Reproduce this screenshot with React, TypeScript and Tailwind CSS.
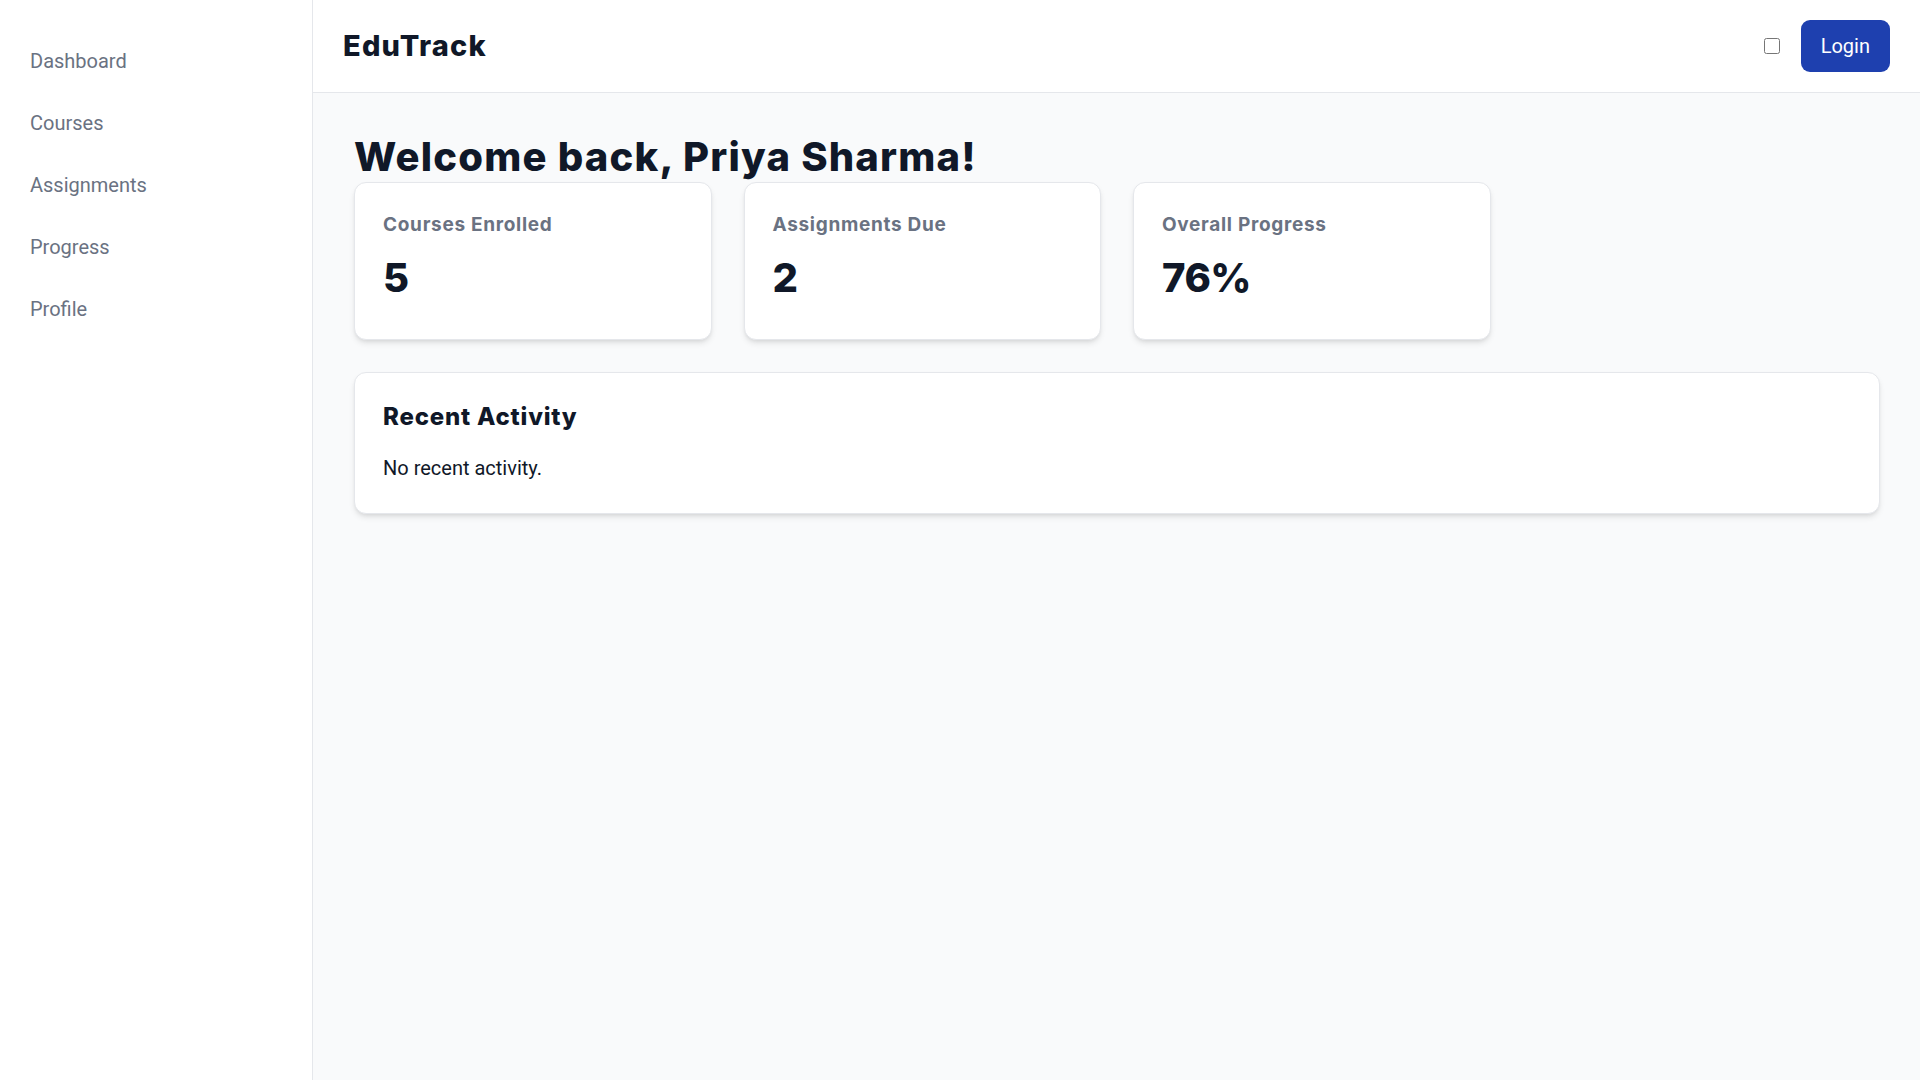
import React from "react";

const navItems = ["Dashboard", "Courses", "Assignments", "Progress", "Profile"];

const stats = [
  { label: "Courses Enrolled", value: "5" },
  { label: "Assignments Due", value: "2" },
  { label: "Overall Progress", value: "76%" },
];

export default function App() {
  return (
    <div className="flex h-screen w-full font-['Roboto',sans-serif] bg-white">
      {/* sidebar */}
      <aside className="w-[313px] shrink-0 border-r border-gray-200 bg-white pt-[30px] px-[30px]">
        <nav className="flex flex-col">
          {navItems.map((item) => (
            <a
              key={item}
              href="#"
              className="block py-[17px] text-xl leading-7 text-gray-500 hover:text-gray-900"
            >
              {item}
            </a>
          ))}
        </nav>
      </aside>

      <div className="flex flex-1 flex-col min-w-0">
        <header className="flex h-[93px] shrink-0 items-center justify-between border-b border-gray-200 bg-white px-[30px]">
          <h1 className="font-['Inter',sans-serif] text-[29px] leading-9 font-extrabold text-gray-900 tracking-[1.2px]">
            EduTrack
          </h1>
          <div className="flex items-center gap-[21px]">
            <input type="checkbox" className="h-4 w-4" />
            <button className="h-[52px] rounded-[9px] bg-[#1e40af] px-5 text-xl text-white">
              Login
            </button>
          </div>
        </header>

        <main className="flex-1 bg-gray-50 pl-[41px] pr-10 pt-[39px]">
          <h2 className="font-['Inter',sans-serif] text-[40px] leading-[50px] font-extrabold text-gray-900 tracking-[1.2px]">
            Welcome back, Priya Sharma!
          </h2>

          <div className="grid grid-cols-4 gap-8">
            {stats.map((s) => (
              <div
                key={s.label}
                className="rounded-xl border border-gray-200 bg-white px-7 pt-7 pb-[31px] shadow-md"
              >
                <p className="font-['Inter',sans-serif] text-[19px] leading-7 font-bold text-gray-500 tracking-[0.7px]">
                  {s.label}
                </p>
                <p className="mt-[9px] font-['Inter',sans-serif] text-[40px] leading-[60px] font-extrabold text-gray-900 tracking-[-0.5px]">
                  {s.value}
                </p>
              </div>
            ))}
          </div>

          <div className="mt-8 rounded-xl border border-gray-200 bg-white px-7 pt-7 pb-[31px] shadow-md">
            <h3 className="font-['Inter',sans-serif] text-2xl leading-8 font-extrabold text-gray-900 tracking-[0.8px]">
              Recent Activity
            </h3>
            <p className="mt-[21px] text-xl leading-7 text-gray-900">No recent activity.</p>
          </div>
        </main>
      </div>
    </div>
  );
}
